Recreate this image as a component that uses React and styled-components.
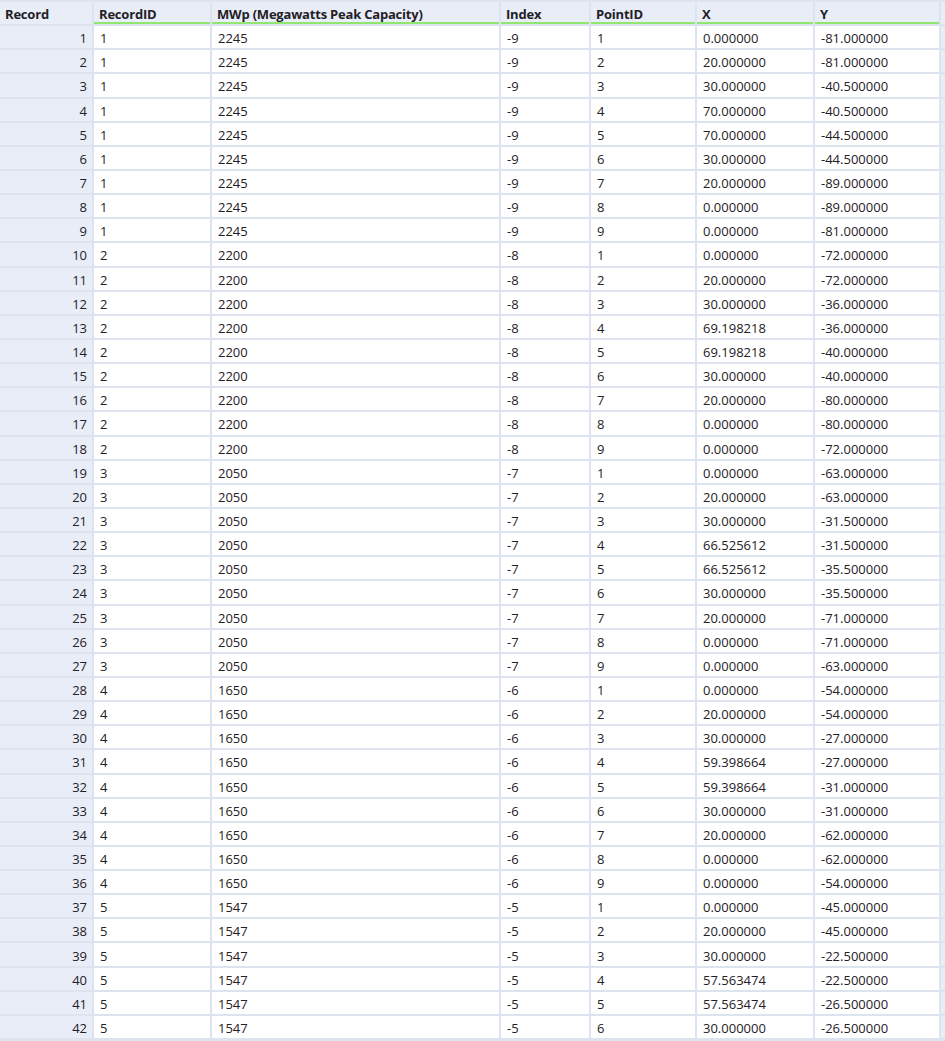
import React from "react";
import styled, { createGlobalStyle } from "styled-components";

const Global = createGlobalStyle`
  html, body { margin: 0; padding: 0; background: #dde3ef; }
  body { font-family: "Open Sans", "Noto Sans", sans-serif; }
`;

const Grid = styled.div`
  display: grid;
  grid-template-columns: 92px 116px 287px 88px 104px 116px 124px 1fr;
  grid-auto-rows: 22.15px;
  column-gap: 2px;
  row-gap: 2px;
  padding-top: 2px;
  width: 945px;
  height: 1041px;
  overflow: hidden;
  background: #dde3ef;
  font-size: 13px;
  color: #1f2126;
`;

const HeadCell = styled.div`
  box-sizing: border-box;
  background: #e9edf8;
  font-weight: 700;
  letter-spacing: -0.2px;
  padding: 3px 5px 0 5px;
  display: flex;
  align-items: center;
  white-space: nowrap;
  overflow: hidden;
  border-bottom: 2px solid ${(p) => (p.$accent ? "#8fe76e" : "#e9edf8")};
`;

const Cell = styled.div`
  box-sizing: border-box;
  background: ${(p) => (p.$index ? "#e9edf8" : "#ffffff")};
  padding: 2px 5px 0 6px;
  display: flex;
  align-items: center;
  justify-content: ${(p) => (p.$index ? "flex-end" : "flex-start")};
  white-space: nowrap;
  overflow: hidden;
`;

const Filler = styled.div`
  background: #e9edf8;
`;

const groups = [
  { id: 1, mw: 2245, idx: -9, x4: "70.000000", ys: ["-81", "-81", "-40.5", "-40.5", "-44.5", "-44.5", "-89", "-89", "-81"] },
  { id: 2, mw: 2200, idx: -8, x4: "69.198218", ys: ["-72", "-72", "-36", "-36", "-40", "-40", "-80", "-80", "-72"] },
  { id: 3, mw: 2050, idx: -7, x4: "66.525612", ys: ["-63", "-63", "-31.5", "-31.5", "-35.5", "-35.5", "-71", "-71", "-63"] },
  { id: 4, mw: 1650, idx: -6, x4: "59.398664", ys: ["-54", "-54", "-27", "-27", "-31", "-31", "-62", "-62", "-54"] },
  { id: 5, mw: 1547, idx: -5, x4: "57.563474", ys: ["-45", "-45", "-22.5", "-22.5", "-26.5", "-26.5"] },
];

const fmt = (v) => Number(v).toFixed(6);

const rows = [];
groups.forEach((g) => {
  const xs = ["0.000000", "20.000000", "30.000000", g.x4, g.x4, "30.000000", "20.000000", "0.000000", "0.000000"];
  g.ys.forEach((y, i) => {
    rows.push({ rid: g.id, mw: g.mw, idx: g.idx, pid: i + 1, x: xs[i], y: fmt(y) });
  });
});

const headers = ["RecordID", "MWp (Megawatts Peak Capacity)", "Index", "PointID", "X", "Y"];

export default function App() {
  return (
    <>
      <Global />
      <Grid>
        <HeadCell>Record</HeadCell>
        {headers.map((h) => (
          <HeadCell key={h} $accent>
            {h}
          </HeadCell>
        ))}
        <Filler />
        {rows.map((r, i) => (
          <React.Fragment key={i}>
            <Cell $index>{i + 1}</Cell>
            <Cell>{r.rid}</Cell>
            <Cell>{r.mw}</Cell>
            <Cell>{r.idx}</Cell>
            <Cell>{r.pid}</Cell>
            <Cell>{r.x}</Cell>
            <Cell>{r.y}</Cell>
            <Filler />
          </React.Fragment>
        ))}
      </Grid>
    </>
  );
}
